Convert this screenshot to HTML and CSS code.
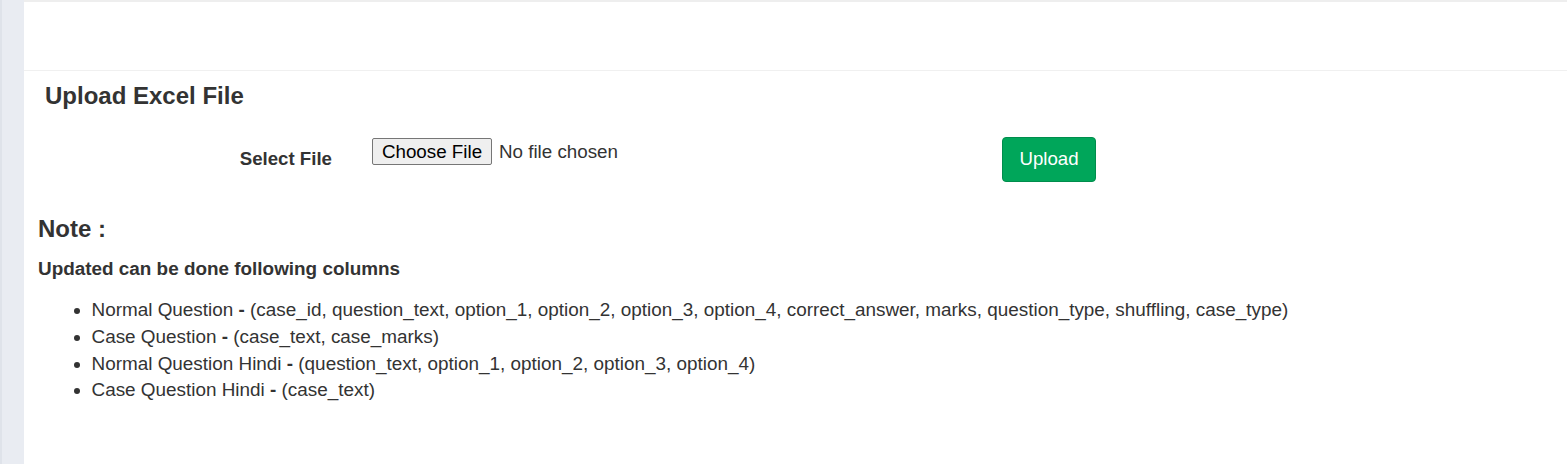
FILE: index.html
```html
<!DOCTYPE html>
<html lang="en">
<head>
<meta charset="utf-8">
<title>Upload Excel File</title>
<link rel="stylesheet" href="styles.css">
</head>
<body>
  <aside class="sidebar"></aside>
  <main class="main">
    <div class="topbar"></div>
    <section class="box">
      <h3 class="box-title">Upload Excel File</h3>
      <form class="form-row">
        <label class="form-label" for="file">Select File</label>
        <div class="form-input">
          <input type="file" id="file" class="file-input">
        </div>
        <div class="form-action">
          <button type="button" class="btn-upload">Upload</button>
        </div>
      </form>
      <div class="note">
        <h4 class="note-title">Note :</h4>
        <p class="note-sub">Updated can be done following columns</p>
        <ul class="note-list">
          <li>Normal Question <b>-</b> (case_id, question_text, option_1, option_2, option_3, option_4, correct_answer, marks, question_type, shuffling, case_type)</li>
          <li>Case Question <b>-</b> (case_text, case_marks)</li>
          <li>Normal Question Hindi <b>-</b> (question_text, option_1, option_2, option_3, option_4)</li>
          <li>Case Question Hindi <b>-</b> (case_text)</li>
        </ul>
      </div>
    </section>
  </main>
</body>
</html>
```

FILE: styles.css
```css
* {
  box-sizing: border-box;
}

html, body {
  height: 100%;
}

body {
  margin: 0;
  display: flex;
  font-family: "Liberation Sans", Arial, sans-serif;
  font-size: 18.67px;
  line-height: 26.67px;
  color: #333333;
  background: #ffffff;
}

.sidebar {
  width: 24px;
  flex: 0 0 24px;
  background: #e9ecf2;
  border-left: 2px solid #dfe3ea;
}

.main {
  flex: 1;
  border-top: 2px solid #eeeeee;
  background: #ffffff;
}

.topbar {
  height: 69px;
  border-bottom: 1px solid #f0f0f0;
}

.box {
  padding-top: 12px;
}

.box-title {
  margin: 0;
  padding-left: 21px;
  font-size: 24px;
  line-height: 26px;
  font-weight: bold;
}

.form-row {
  display: flex;
  align-items: flex-start;
  margin: 28px 0 0;
}

.form-label {
  width: 308px;
  flex: 0 0 308px;
  text-align: right;
  font-weight: bold;
  padding-top: 9.33px;
}

.form-input {
  width: 670px;
  flex: 0 0 670px;
  padding-left: 40px;
  padding-top: 0.5px;
}

.file-input {
  font-family: "Liberation Sans", Arial, sans-serif;
  font-size: 18.8px;
  color: #333333;
  height: 27px;
  line-height: 27px;
}

.file-input::file-selector-button {
  font-family: "Liberation Sans", Arial, sans-serif;
  font-size: 18.8px;
  color: #000000;
  height: 27px;
  width: 120px;
  padding: 0;
  margin: 0 7px 0 0;
  border: 1px solid #767676;
  border-radius: 2px;
  background: #efefef;
}

.btn-upload {
  font-family: "Liberation Sans", Arial, sans-serif;
  font-size: 18.67px;
  line-height: 26.67px;
  color: #ffffff;
  background: #00a65a;
  border: 1px solid #008d4c;
  border-radius: 4px;
  padding: 8px 16px;
  width: 94px;
  cursor: pointer;
}

.note {
  padding-left: 14px;
  margin-top: 34px;
}

.note-title {
  margin: 0;
  font-size: 24px;
  line-height: 26px;
  font-weight: bold;
}

.note-sub {
  margin: 14px 0 0;
  font-weight: bold;
  font-size: 18.9px;
}

.note-list {
  margin: 15px 0 0;
  padding-left: 53.5px;
  font-size: 18.9px;
}
```
